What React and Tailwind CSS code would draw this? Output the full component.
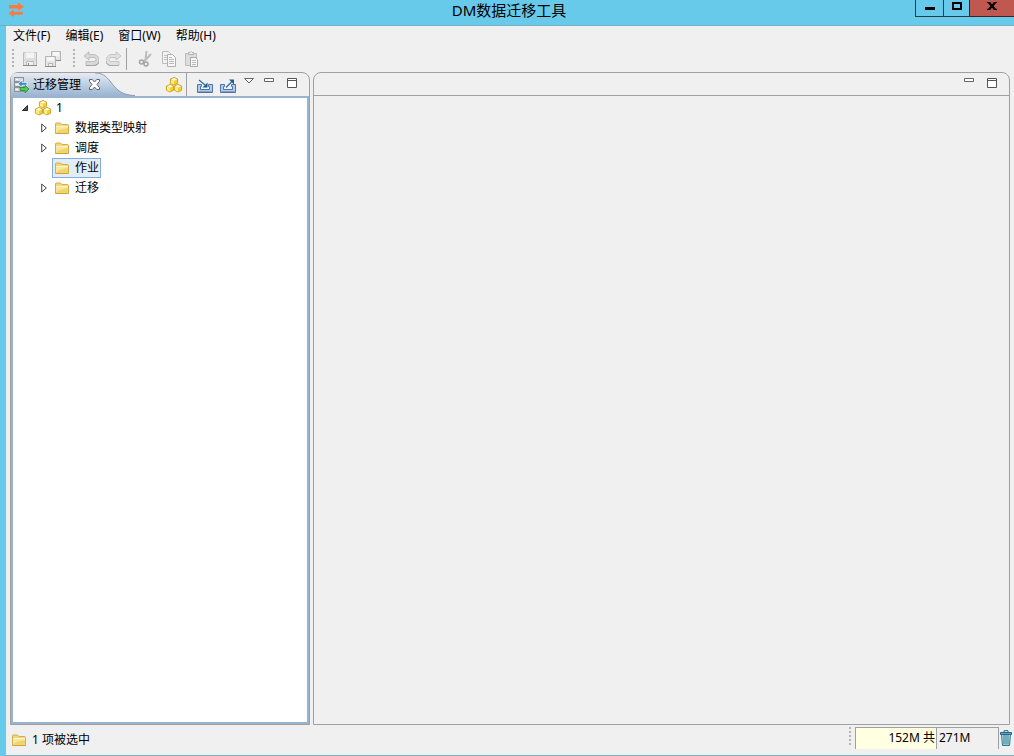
const menus = ['文件(F)', '编辑(E)', '窗口(W)', '帮助(H)'];

const nodes = [
  { name: '数据类型映射', expandable: true },
  { name: '调度', expandable: true },
  { name: '作业', selected: true },
  { name: '迁移', expandable: true },
];

const Icon = ({ children, className = '' }) => (
  <svg viewBox="0 0 16 16" className={`h-4 w-4 shrink-0 ${className}`} fill="none" aria-hidden="true">
    {children}
  </svg>
);

const FolderIcon = () => (
  <Icon>
    <path d="M1.500 13v-9q0-1 1-1h4l1.500 1.500h5.500q1 0 1 1V13q0 .5-.5.5H2q-.5 0-.5-.5z" fill="#f0d67c" stroke="#d4ae4a" />
    <path d="M2 13V6h12v7z" fill="#f8e69a" />
    <path d="M2.500 6.500h11.500" stroke="#fff6cc" />
    <path d="M2 13q1-3.500 12-5v5z" fill="#f0d470" />
    <path d="M1.500 13.500h13" stroke="#cfa33a" />
  </Icon>
);

const Cube = ({ x, y }) => (
  <g transform={`translate(${x} ${y})`}>
    <path d="M4 .4 7.600 2v4.200L4 8 .4 6.200V2z" fill="#f6cf2a" stroke="#c29420" strokeWidth=".8" />
    <path d="M4 .9 7 2.300 4 3.800 1 2.300z" fill="#fffce0" />
    <path d="M1 2.800 3.900 4.200v3.200L1 5.900z" fill="#fdf08c" />
  </g>
);

const CubesIcon = () => (
  <Icon className="overflow-visible">
    <Cube x={4} y={0} />
    <Cube x={0} y={7} />
    <Cube x={8} y={7} />
  </Icon>
);

const MinimizeIcon = () => (
  <svg viewBox="0 0 10 5" className="h-[5px] w-[10px]" aria-hidden="true">
    <path d="M.5 .5h9v3h-9z" fill="#fff" stroke="#666" />
  </svg>
);

const MaximizeIcon = () => (
  <svg viewBox="0 0 10 10" className="h-[10px] w-[10px]" aria-hidden="true">
    <path d="M.5 .5h9v9h-9zM0 2.500h10" fill="#fff" stroke="#555" />
  </svg>
);

const Tray = () => (
  <>
    <path d="M.5 5.500h4v2h-1v3h9v-3h-1v-2h4v8H.5z" fill="#b4cdea" stroke="#4c73a8" />
    <path d="M1.500 12.500h13" stroke="#7f9fcb" />
  </>
);

const Grip = () => (
  <svg viewBox="0 0 2 20" className="h-5 w-[2px] shrink-0" aria-hidden="true">
    <path d="M1 0v20" stroke="#b4b4b4" strokeWidth="2" strokeDasharray="2 2" />
  </svg>
);

function TitleBar() {
  return (
    <header className="grid h-[26px] grid-cols-[1fr_auto_1fr] items-start border-b border-[#74afc4]">
      <svg viewBox="0 0 16 16" className="mt-[2px] ml-2 h-4 w-4" fill="#f97b42" aria-hidden="true">
        <path d="M1 3h9V.5L16 4.800 10 9V6.500H1z" />
        <path d="M15 9.500H6V7L0 11.300l6 4.200V13h9z" stroke="#67caea" strokeWidth=".6" />
      </svg>
      <h1 className="pl-1 text-[15px] leading-5">DM数据迁移工具</h1>
      <div className="flex h-[17px] justify-end">
        <button aria-label="最小化" className="flex w-[29px] items-start justify-center border border-t-0 border-[#203d48] pt-[7px]">
          <svg viewBox="0 0 10 3" className="h-[3px] w-[10px]"><path d="M0 0h10v3H0z" /></svg>
        </button>
        <button aria-label="最大化" className="flex w-[25px] items-start justify-center border-b border-[#203d48] pt-[2px]">
          <svg viewBox="0 0 10 8" className="h-2 w-[10px]" fill="none"><path d="M1 1h8v6H1z" stroke="#000" strokeWidth="2" /></svg>
        </button>
        <button aria-label="关闭" className="flex w-[45px] items-start justify-center border-b border-l border-[#40211e] bg-[#c1584f] pt-[2px]">
          <svg viewBox="0 0 10 8" className="h-2 w-[10px]" fill="none">
            <path d="M1.500 0l7 8M8.500 0l-7 8" stroke="#000" strokeWidth="2.200" />
            <path d="M0 .5h3.500M6.500 .5H10M0 7.500h3.500M6.500 7.500H10" stroke="#000" />
          </svg>
        </button>
      </div>
    </header>
  );
}

function Toolbar() {
  return (
    <div className="flex h-[26px] items-center pl-[6px]">
      <Grip />
      <div className="flex gap-[7px] pr-3 pl-2">
        <button aria-label="保存">
          <Icon>
            <path d="M1.500 1.500h13v13h-13z" fill="#e4e4e4" stroke="#bbb" />
            <path d="M3.500 1.500h9v6h-9z" fill="#f4f4f4" stroke="#ddd" />
            <path d="M2 9h12" stroke="#d4d4d4" />
            <path d="M4.500 10.500h7v4h-7z" fill="#f0f0f0" stroke="#bbb" />
            <path d="M6.500 12v2M1 14.500h14" stroke="#8c8c8c" />
          </Icon>
        </button>
        <button aria-label="全部保存">
          <Icon>
            <path d="M6.500 .5h9v9h-9z" fill="#e4e4e4" stroke="#b4b4b4" />
            <path d="M8 1h6v4.500H8z" fill="#f6f6f6" />
            <path d="M6 9.500h10" stroke="#8c8c8c" />
            <path d="M.5 5.500h10v10H.5z" fill="#e4e4e4" stroke="#b4b4b4" />
            <path d="M2 6h7v4H2z" fill="#f6f6f6" />
            <path d="M3.500 12.500h4v3h-4z" fill="#f0f0f0" stroke="#b4b4b4" />
            <path d="M0 15.500h11" stroke="#8c8c8c" />
          </Icon>
        </button>
      </div>
      <Grip />
      <div className="flex gap-[7px] pr-1 pl-2">
        <button aria-label="撤消">
          <Icon>
            <path d="M6 .8 1 5l5 4V6.500h5q2 0 2 2t-2 2H3v4h9q4-.5 4-5T11.500 3.500H6z" fill="#d8d8d8" stroke="#b4b4b4" strokeWidth=".8" />
            <path d="M3 14.500h9q3-.5 3.700-3" stroke="#a4a4a4" />
          </Icon>
        </button>
        <button aria-label="重做">
          <Icon className="-scale-x-100">
            <path d="M6 .8 1 5l5 4V6.500h5q2 0 2 2t-2 2H3v4h9q4-.5 4-5T11.500 3.500H6z" fill="#e0e0e0" stroke="#bcbcbc" strokeWidth=".8" />
            <path d="M3 14.500h9q3-.5 3.700-3" stroke="#aaa" />
          </Icon>
        </button>
      </div>
      <div className="h-[22px] w-px bg-[#a0a0a0]" />
      <div className="flex gap-[7px] pl-[11px]">
        <button aria-label="剪切">
          <Icon>
            <path d="M8.500 0 7.500 9M13 3 6 10.500" stroke="#bcbcbc" strokeWidth="2" />
            <circle cx="3.500" cy="11" r="2" stroke="#a4a4a4" strokeWidth="1.500" />
            <circle cx="8" cy="13" r="2" stroke="#a4a4a4" strokeWidth="1.500" />
          </Icon>
        </button>
        <button aria-label="复制">
          <Icon>
            <path d="M1.500 .5h6l2 2v10h-8z" fill="#f2f2f2" stroke="#bcbcbc" />
            <path d="M3 4.500h3M3 6.500h3M3 8.500h3" stroke="#c4c4c4" />
            <path d="M6.500 3.500h5l3 3v9h-8z" fill="#f7f7f7" stroke="#b0b0b0" />
            <path d="M8 6.500h3M8 8.500h5M8 10.500h5M8 12.500h5" stroke="#bbb" />
          </Icon>
        </button>
        <button aria-label="粘贴">
          <Icon>
            <path d="M1.500 2.500h11v12h-11z" fill="#ddd" stroke="#bcbcbc" />
            <path d="M4.500 3.500v-2h1.500q1-2 2 0h1.500v2z" fill="#eee" stroke="#b0b0b0" />
            <path d="M6.500 6.500h5l2 2v7h-7z" fill="#f7f7f7" stroke="#a8a8a8" />
            <path d="M8 9.500h4M8 11.500h4M8 13.500h4" stroke="#bbb" />
          </Icon>
        </button>
      </div>
    </div>
  );
}

function MigrationTab() {
  return (
    <div className="relative flex h-full w-[126px] items-center gap-1 pl-[2px]">
      <svg viewBox="0 0 126 24" preserveAspectRatio="none" className="absolute inset-0 h-full w-full" fill="none" aria-hidden="true">
        <defs>
          <linearGradient id="tab" x2="0" y2="1">
            <stop stopColor="#e6ebf2" />
            <stop offset="1" stopColor="#99b4d1" />
          </linearGradient>
        </defs>
        <path d="M0 24V6Q0 0 7 0H84C103 0 98 23 124 23.500V24z" fill="url(#tab)" />
        <path d="M84 0C103 0 98 23 124 23.500" stroke="#8c9aaa" />
      </svg>
      <Icon className="relative">
        <path d="M1 0h10v15H1z" fill="#8d9298" />
        <path d="M2 1h8v3H2zM2 6h8v3H2zM2 11h8v3H2z" fill="#d9dcdf" />
        <path d="M3 2.500h2M3 7.500h2M3 12.500h2" stroke="#fff" />
        <path d="M5 6.800 9 3v2.300h5v3H9v2.300z" fill="#2f8fd6" stroke="#fff" strokeWidth=".8" />
        <path d="M16 12 12 8.300v2.200H7v3h5v2.300z" fill="#4fcf4a" stroke="#187b25" strokeWidth=".7" />
      </Icon>
      <span className="relative leading-5">迁移管理</span>
      <button aria-label="关闭迁移管理" className="relative ml-1">
        <svg viewBox="0 0 11 11" className="h-[11px] w-[11px]">
          <path d="M.5 .5h2.800L5.500 3 7.700 .5h2.800v1.800L8 5.500l2.500 3.200v1.800H7.700L5.500 8 3.300 10.500H.5V8.700L3 5.500 .5 2.300z" fill="#fff" stroke="#5c646e" />
        </svg>
      </button>
    </div>
  );
}

function MigrationView() {
  return (
    <section className="flex w-[300px] shrink-0 flex-col rounded-t-lg border border-[#a0a0a0]">
      <div className="flex h-[23px] shrink-0 items-center">
        <MigrationTab />
        <div className="flex h-full flex-1 pr-3">
          <div className="ml-auto flex h-full items-center border-r border-[#a0a0a0] pr-1">
            <button aria-label="新建工程"><CubesIcon /></button>
          </div>
          <div className="flex gap-[7px] pt-1 pl-[10px]">
            <button aria-label="导入">
              <Icon>
                <Tray />
                <path d="M2 1 8 6" stroke="#2d6c9c" strokeWidth="1.200" />
                <path d="M10.500 8.500V3.500L5.500 8.500z" fill="#1c5f96" />
              </Icon>
            </button>
            <button aria-label="导出">
              <Icon>
                <Tray />
                <path d="M6 8.500l6-6" stroke="#2d6c9c" strokeWidth="1.200" />
                <path d="M14 .5v5L9 .5z" fill="#1c5f96" />
              </Icon>
            </button>
          </div>
          <div className="flex items-start gap-[10px] pt-[5px] pl-2">
            <button aria-label="视图菜单">
              <svg viewBox="0 0 10 6" className="h-[6px] w-[10px]"><path d="M.5 .5h9L5 5z" fill="#fff" stroke="#666" /></svg>
            </button>
            <button aria-label="最小化视图"><MinimizeIcon /></button>
            <button aria-label="最大化视图" className="ml-[3px]"><MaximizeIcon /></button>
          </div>
        </div>
      </div>
      <div className="flex-1 border-2 border-[#99b4d1] bg-white">
        <ul role="tree">
          <li role="treeitem" aria-expanded="true">
            <div className="flex h-5 items-center pl-2">
              <svg viewBox="0 0 8 8" className="h-2 w-2"><path d="M6.500 1.500v5h-5z" fill="#595959" stroke="#262626" /></svg>
              <span className="ml-[6px]"><CubesIcon /></span>
              <span className="ml-[5px]">1</span>
            </div>
            <ul role="group">
              {nodes.map((n) => (
                <li key={n.name} role="treeitem" aria-selected={!!n.selected} className="flex h-5 items-center pl-7">
                  <span className="w-[11px]">
                    {n.expandable && (
                      <svg viewBox="0 0 6 10" className="h-[10px] w-[6px]"><path d="M.7 1v8L5.300 5z" fill="#fff" stroke="#444" /></svg>
                    )}
                  </span>
                  <span
                    className={`flex h-5 items-center gap-[5px] border px-px ${n.selected ? 'border-[#84acdd] bg-[#e2edfa]' : 'border-transparent'}`}
                  >
                    <FolderIcon />
                    {n.name}
                  </span>
                </li>
              ))}
            </ul>
          </li>
        </ul>
      </div>
    </section>
  );
}

function EditorArea() {
  return (
    <main className="flex min-w-0 flex-1 flex-col rounded-t-lg border border-[#a0a0a0]">
      <div className="flex h-[23px] items-start justify-end gap-[13px] border-b border-[#a0a0a0] pt-[5px] pr-3">
        <button aria-label="最小化编辑器"><MinimizeIcon /></button>
        <button aria-label="最大化编辑器"><MaximizeIcon /></button>
      </div>
    </main>
  );
}

function StatusBar() {
  return (
    <footer className="flex h-[30px] items-center pr-[2px] pl-[5px]">
      <FolderIcon />
      <span className="ml-[5px]">1 项被选中</span>
      <div className="ml-auto flex h-full items-start gap-1 pt-[2px]">
        <Grip />
        <div className="flex h-[22px] w-[144px] border-t border-l border-[#a0a0a0] leading-5">
          <span className="w-[81px] border-r border-[#a0a0a0] bg-[#ffffe1] pr-px text-right whitespace-nowrap">152M 共</span>
          <span className="flex-1 border-r border-[#a0a0a0] pl-[2px]">271M</span>
        </div>
        <button aria-label="运行垃圾回收" className="-ml-[3px] pt-[3px]">
          <svg viewBox="0 0 12 16" className="h-4 w-3" fill="none">
            <path d="M1.500 4.500h9l-1 11h-7z" fill="#b4dcdc" stroke="#2f7b94" />
            <path d="M4 5v9.500M6 5v9.500M8 5v9.500" stroke="#3b7f9a" />
            <path d="M.5 2.500h11v2H.5z" fill="#5da7b8" stroke="#27678a" />
            <path d="M4 2V.7h4V2" stroke="#27678a" />
          </svg>
        </button>
      </div>
    </footer>
  );
}

export default function App() {
  return (
    <div className="flex min-h-screen flex-col bg-[#67caea] font-['Noto_Sans','Noto_Sans_CJK_SC',sans-serif] text-xs text-black">
      <TitleBar />
      <div className="ml-[6px] flex flex-1 flex-col border-b border-[#74afc4] bg-[#f0f0f0]">
        <nav className="flex h-5 items-center gap-[15px] pl-[7px]">
          {menus.map((m) => (
            <button key={m}>{m}</button>
          ))}
        </nav>
        <Toolbar />
        <div className="flex flex-1 gap-[3px] pr-1 pl-1">
          <MigrationView />
          <EditorArea />
        </div>
        <StatusBar />
      </div>
    </div>
  );
}
